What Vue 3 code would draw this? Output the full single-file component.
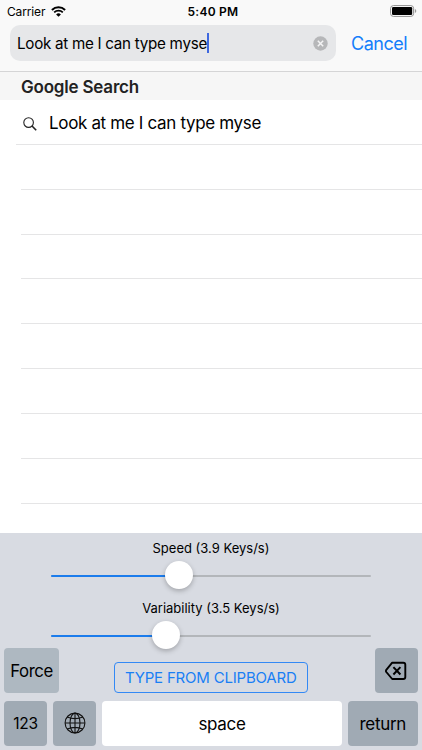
<script setup>
import { ref } from 'vue'

const query = ref('Look at me I can type myse')
const emptyRows = 8
const sliders = [
  { id: 'speed', label: 'Speed (3.9 Keys/s)', fill: 40 },
  { id: 'variability', label: 'Variability (3.5 Keys/s)', fill: 35.8 },
]
</script>

<template>
  <div class="phone">
    <header class="header">
      <div class="status">
        <div class="carrier">
          <span class="carrier-name">Carrier</span>
          <svg class="wifi" viewBox="0 0 15 11" width="15" height="11">
            <path d="M0.9 4A9.6 9.6 0 0 1 14.1 4" fill="none" stroke="#000" stroke-width="2" />
            <path d="M3.2 6.4A6.2 6.2 0 0 1 11.8 6.4" fill="none" stroke="#000" stroke-width="1.8" />
            <path d="M7.5 10.8L5.1 8.4A3.4 3.4 0 0 1 9.9 8.4Z" />
          </svg>
        </div>
        <span class="clock">5:40 PM</span>
        <svg class="battery" viewBox="0 0 27 12" width="27" height="12">
          <rect x="0.6" y="0.6" width="23" height="10.8" rx="2.8" fill="#fff" stroke="#8e8e8e" />
          <rect x="2" y="2" width="20.2" height="8" rx="1.3" />
          <path d="M24.9 4Q26.3 4.6 26.3 6T24.9 8Z" fill="#999" />
        </svg>
      </div>
      <div class="search-bar">
        <div class="field">
          <span class="query">{{ query }}</span>
          <i class="caret"></i>
          <svg class="clear" viewBox="0 0 15 15" width="15" height="15">
            <circle cx="7.5" cy="7.5" r="7.2" fill="#b6b7b9" />
            <path d="M4.8 4.8L10.2 10.2M10.2 4.8L4.8 10.2" stroke="#f4f4f5" stroke-width="1.5" />
          </svg>
        </div>
        <span class="cancel">Cancel</span>
      </div>
    </header>

    <main class="results">
      <h2 class="section"><span>Google Search</span></h2>
      <div class="row suggestion">
        <svg class="glass" viewBox="0 0 14 14" width="14" height="14">
          <circle cx="5.6" cy="5.6" r="4.8" fill="none" stroke="#222" stroke-width="1.1" />
          <path d="M9 9L13.2 13.2" stroke="#222" stroke-width="1.6" />
        </svg>
        <span class="suggestion-text">{{ query }}</span>
      </div>
      <div v-for="n in emptyRows" :key="n" class="row empty"></div>
    </main>

    <section class="keyboard">
      <div v-for="s in sliders" :key="s.id" class="control">
        <span class="label" :class="s.id">{{ s.label }}</span>
        <div class="track">
          <div class="fill" :style="{ width: s.fill + '%' }"><i class="knob"></i></div>
        </div>
      </div>
      <div class="keys upper">
        <div class="key force"><span>Force</span></div>
        <div class="clipboard"><span>TYPE FROM CLIPBOARD</span></div>
        <div class="key delete">
          <svg viewBox="0 0 22 20" width="22" height="20">
            <path d="M7.2 1.7H18.3Q20.3 1.7 20.3 3.7V16Q20.3 18 18.3 18H7.2L1.3 11Q0.6 9.9 1.3 8.8Z" fill="none" stroke="#000" stroke-width="1.9" stroke-linejoin="round" />
            <path d="M8.4 6.1L15.4 13.5M15.4 6.1L8.4 13.5" stroke="#000" stroke-width="2" />
          </svg>
        </div>
      </div>
      <div class="keys lower">
        <div class="key numbers"><span>123</span></div>
        <div class="key globe">
          <svg viewBox="0 0 22 22" width="22" height="22" fill="none" stroke="#111" stroke-width="1.1">
            <circle cx="11" cy="11" r="9.9" />
            <ellipse cx="11" cy="11" rx="5" ry="9.9" />
            <path d="M11 1.1V20.9M1.1 11H20.9M3.2 5Q11 8.2 18.8 5M3.2 17Q11 13.8 18.8 17" />
          </svg>
        </div>
        <div class="key space"><span>space</span></div>
        <div class="key return"><span>return</span></div>
      </div>
    </section>
  </div>
</template>

<style>
body {
  margin: 0;
  overflow: hidden;
}
</style>

<style scoped>
.phone {
  width: 422px;
  height: 750px;
  display: flex;
  flex-direction: column;
  overflow: hidden;
  box-sizing: border-box;
  background: #fff;
  color: #000;
  font-family: Inter, "Liberation Sans", sans-serif;
  white-space: nowrap;
}
svg {
  display: block;
  flex: none;
}
.header {
  height: 72px;
  box-sizing: border-box;
  background: #f9f9f9;
  border-bottom: 1px solid #d5d5d6;
}
.status {
  height: 25px;
  box-sizing: border-box;
  padding: 0 5px 3px 7px;
  display: grid;
  grid-template-columns: 1fr auto 1fr;
  align-items: center;
  font-size: 12px;
}
.carrier {
  display: flex;
  align-items: center;
  gap: 6px;
}
.carrier-name {
  letter-spacing: -0.15px;
}
.clock {
  font-weight: 600;
  letter-spacing: 0.25px;
  padding-left: 2px;
}
.battery {
  justify-self: end;
}
.search-bar {
  display: flex;
  align-items: center;
  padding-left: 10px;
}
.field {
  width: 326px;
  height: 36px;
  box-sizing: border-box;
  padding: 0 8px 0 7px;
  border-radius: 10px;
  background: #e6e7e9;
  display: flex;
  align-items: center;
}
.query {
  font-size: 15.2px;
  letter-spacing: -0.28px;
}
.caret {
  width: 2px;
  height: 20px;
  background: #3f68df;
}
.clear {
  margin-left: auto;
}
.cancel {
  margin-left: 15px;
  font-size: 18px;
  letter-spacing: -0.5px;
  color: #147efb;
}
.results {
  height: 460.5px;
  flex: none;
}
.section {
  margin: 0;
  height: 28px;
  padding: 1px 0 0 21px;
  box-sizing: border-box;
  background: #f6f6f6;
  font-size: 17px;
  line-height: 28px;
  font-weight: 600;
  letter-spacing: -0.2px;
  color: #222;
}
.row {
  height: 44.83px;
  box-sizing: border-box;
  border-bottom: 1px solid #e5e5e6;
  margin-left: 21px;
}
.empty {
  height: 44.83px;
}
.suggestion {
  height: 45px;
  margin-left: 16px;
  padding: 2px 0 0 7px;
  display: flex;
  align-items: center;
}
.glass {
  margin-top: 2px;
}
.suggestion-text {
  margin-left: 12px;
  font-size: 17px;
  letter-spacing: -0.34px;
}
.keyboard {
  flex: 1;
  background: #d8dbe2;
  padding: 7.6px 4.5px 0 4px;
}
.control {
  height: 59.6px;
  padding: 0 46.5px 0 47px;
}
.label {
  display: block;
  height: 16px;
  line-height: 16px;
  text-align: center;
  font-size: 13px;
}
.track {
  height: 2px;
  margin-top: 19px;
  border-radius: 1px;
  background: #b3b6ba;
}
.fill {
  height: 2px;
  border-radius: 1px;
  background: #1c7cec;
  display: flex;
  align-items: center;
  justify-content: flex-end;
}
.knob {
  flex: none;
  width: 28px;
  height: 28px;
  margin: -2px -14px 0 0;
  border-radius: 50%;
  background: #fff;
  box-shadow: 0 2px 5px rgba(0, 0, 0, 0.25);
}
.keys {
  display: flex;
}
.upper {
  height: 44.5px;
  margin-top: -11px;
  justify-content: space-between;
  align-items: flex-end;
}
.lower {
  height: 45px;
  margin-top: 8px;
  gap: 6px;
}
.key {
  height: 100%;
  border-radius: 4px;
  background: #a0aab4;
  display: flex;
  align-items: center;
  justify-content: center;
  font-size: 17px;
  letter-spacing: -0.3px;
}
.force {
  width: 55px;
  background: #aeb8c1;
  font-size: 16.8px;
}
.force span {
  letter-spacing: -0.4px;
}
.clipboard {
  width: 194px;
  height: 31px;
  margin-left: 12px;
  margin-right: 24px;
  box-sizing: border-box;
  border: 1px solid #3389f5;
  border-radius: 4px;
  display: flex;
  align-items: center;
  justify-content: center;
  font-size: 15px;
  letter-spacing: -0.2px;
  color: #197ff5;
}
.delete,
.numbers,
.globe {
  width: 43px;
}
.numbers {
  font-size: 15.5px;
}
.space {
  flex: 1;
  background: #fff;
}
.space span,
.return span {
  padding-top: 1px;
}
.return {
  width: 69.5px;
}
</style>
